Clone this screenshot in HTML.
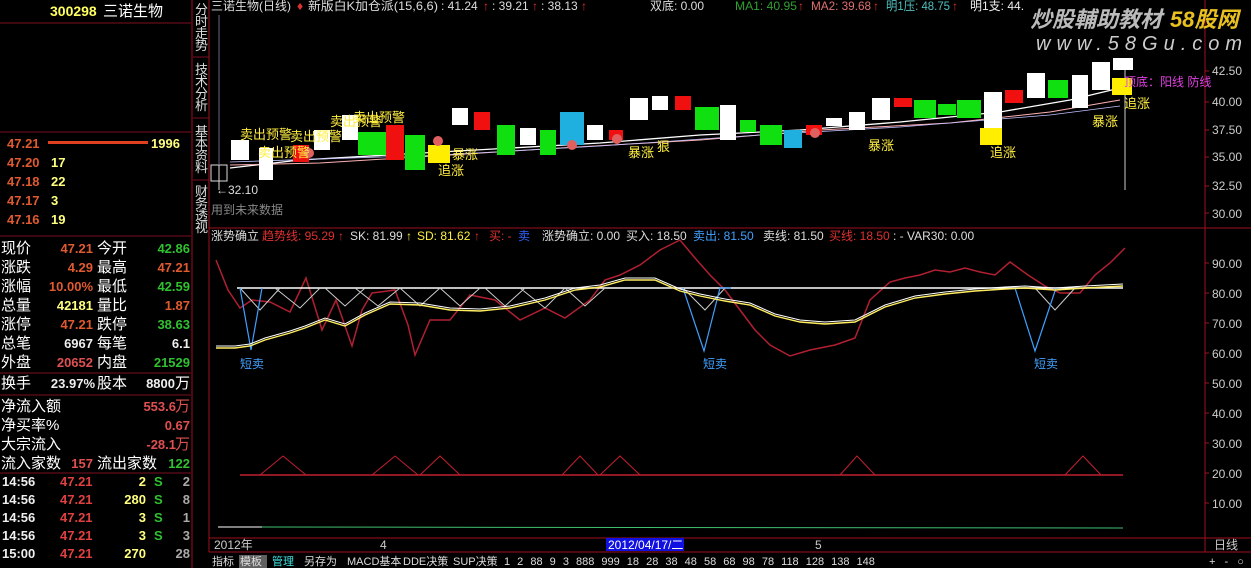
<!DOCTYPE html><html><head><meta charset="utf-8"><style>
body{margin:0;width:1251px;height:568px;background:#000;overflow:hidden;font-family:"Liberation Sans","Noto Sans CJK SC",sans-serif;}
svg{display:block}
text{font-family:"Liberation Sans","Noto Sans CJK SC",sans-serif}
</style></head><body>
<svg width="1251" height="568" viewBox="0 0 1251 568" xmlns="http://www.w3.org/2000/svg">
<rect width="1251" height="568" fill="#000"/>
<g font-size="14">
<text x="50" y="16" fill="#ffff60" font-weight="bold" font-size="14">300298</text>
<text x="103" y="16" fill="#fff" font-size="15">三诺生物</text>
<line x1="0" y1="23" x2="191" y2="23" stroke="#7a1020"/>
<line x1="0" y1="132" x2="191" y2="132" stroke="#7a1020"/>
<text x="7" y="148" fill="#e05a30" font-weight="bold" font-size="13">47.21</text>
<rect x="48" y="141" width="100" height="3" fill="#e04020"/>
<text x="151" y="148" fill="#ffff80" font-weight="bold" font-size="13">1996</text>
<g font-weight="bold" font-size="13"><text x="7" y="167" fill="#e05a30">47.20</text><text x="51" y="167" fill="#ffff80">17</text>
<text x="7" y="186" fill="#e05a30">47.18</text><text x="51" y="186" fill="#ffff80">22</text>
<text x="7" y="205" fill="#e05a30">47.17</text><text x="51" y="205" fill="#ffff80">3</text>
<text x="7" y="224" fill="#e05a30">47.16</text><text x="51" y="224" fill="#ffff80">19</text></g>
<line x1="0" y1="236" x2="191" y2="236" stroke="#7a1020"/>
<g fill="#fff" font-size="15">
<text x="1" y="253">现价</text><text x="97" y="253">今开</text>
<text x="1" y="272">涨跌</text><text x="97" y="272">最高</text>
<text x="1" y="291">涨幅</text><text x="97" y="291">最低</text>
<text x="1" y="310">总量</text><text x="97" y="310">量比</text>
<text x="1" y="329">涨停</text><text x="97" y="329">跌停</text>
<text x="1" y="348">总笔</text><text x="97" y="348">每笔</text>
<text x="1" y="367">外盘</text><text x="97" y="367">内盘</text>
<text x="1" y="388">换手</text><text x="97" y="388">股本</text>
<text x="1" y="411">净流入额</text><text x="1" y="430">净买率%</text><text x="1" y="449">大宗流入</text>
<text x="1" y="468">流入家数</text><text x="97" y="468">流出家数</text>
</g>
<g font-weight="bold" font-size="13" text-anchor="end">
<text x="93" y="253" fill="#e05a30">47.21</text><text x="190" y="253" fill="#30c030">42.86</text>
<text x="93" y="272" fill="#e05a30">4.29</text><text x="190" y="272" fill="#e05a30">47.21</text>
<text x="93" y="291" fill="#e05a30">10.00%</text><text x="190" y="291" fill="#30c030">42.59</text>
<text x="93" y="310" fill="#ffff80">42181</text><text x="190" y="310" fill="#e05a30">1.87</text>
<text x="93" y="329" fill="#e05a30">47.21</text><text x="190" y="329" fill="#30c030">38.63</text>
<text x="93" y="348" fill="#eee">6967</text><text x="190" y="348" fill="#eee">6.1</text>
<text x="93" y="367" fill="#e05050">20652</text><text x="190" y="367" fill="#30c030">21529</text>
<text x="95" y="388" fill="#eee">23.97%</text><text x="175" y="388" fill="#eee">8800</text>
<text x="176" y="411" fill="#e05050">553.6</text><text x="190" y="430" fill="#e05050">0.67</text><text x="176" y="449" fill="#e05050">-28.1</text>
<text x="93" y="468" fill="#e05050">157</text><text x="190" y="468" fill="#30c030">122</text>
</g>
<g fill="#fff" font-size="15"><text x="175" y="388">万</text></g>
<g fill="#e05050" font-size="15"><text x="175" y="411">万</text><text x="175" y="449">万</text></g>
<line x1="0" y1="373" x2="191" y2="373" stroke="#7a1020"/>
<line x1="0" y1="395" x2="191" y2="395" stroke="#7a1020"/>
<line x1="0" y1="473" x2="191" y2="473" stroke="#7a1020"/>
<g font-weight="bold" font-size="13">
<text x="2" y="486" fill="#eee">14:56</text><text x="60" y="486" fill="#e04040">47.21</text><text x="146" y="486" fill="#ffff80" text-anchor="end">2</text><text x="154" y="486" fill="#30c030">S</text><text x="190" y="486" fill="#aaa" text-anchor="end">2</text>
<text x="2" y="504" fill="#eee">14:56</text><text x="60" y="504" fill="#e04040">47.21</text><text x="146" y="504" fill="#ffff80" text-anchor="end">280</text><text x="154" y="504" fill="#30c030">S</text><text x="190" y="504" fill="#aaa" text-anchor="end">8</text>
<text x="2" y="522" fill="#eee">14:56</text><text x="60" y="522" fill="#e04040">47.21</text><text x="146" y="522" fill="#ffff80" text-anchor="end">3</text><text x="154" y="522" fill="#30c030">S</text><text x="190" y="522" fill="#aaa" text-anchor="end">1</text>
<text x="2" y="540" fill="#eee">14:56</text><text x="60" y="540" fill="#e04040">47.21</text><text x="146" y="540" fill="#ffff80" text-anchor="end">3</text><text x="154" y="540" fill="#30c030">S</text><text x="190" y="540" fill="#aaa" text-anchor="end">3</text>
<text x="2" y="558" fill="#eee">15:00</text><text x="60" y="558" fill="#e04040">47.21</text><text x="146" y="558" fill="#ffff80" text-anchor="end">270</text><text x="190" y="558" fill="#aaa" text-anchor="end">28</text>
</g>
</g>
<line x1="192" y1="0" x2="192" y2="568" stroke="#a01020"/>
<g fill="#ddd" font-size="13">
<text x="195" y="14">分</text><text x="195" y="26">时</text><text x="195" y="38">走</text><text x="195" y="50">势</text>
<text x="195" y="74">技</text><text x="195" y="86">术</text><text x="195" y="98">分</text><text x="195" y="110">析</text>
<text x="195" y="136">基</text><text x="195" y="148">本</text><text x="195" y="160">资</text><text x="195" y="172">料</text>
<text x="195" y="196">财</text><text x="195" y="208">务</text><text x="195" y="220">透</text><text x="195" y="232">视</text>
</g>
<g stroke="#7a1020"><line x1="193" y1="57" x2="209" y2="57"/><line x1="193" y1="118" x2="209" y2="118"/><line x1="193" y1="180" x2="209" y2="180"/></g>
<line x1="209" y1="0" x2="209" y2="552" stroke="#a01020"/>
<line x1="1205" y1="0" x2="1205" y2="552" stroke="#a01020"/>
<line x1="209" y1="228" x2="1251" y2="228" stroke="#a01020"/>
<line x1="209" y1="538" x2="1251" y2="538" stroke="#a01020"/>
<line x1="209" y1="552" x2="1251" y2="552" stroke="#a01020"/>
<g fill="#ccc" font-size="12">
<text x="1212" y="75">42.50</text><text x="1212" y="106">40.00</text><text x="1212" y="134">37.50</text><text x="1212" y="161">35.00</text><text x="1212" y="190">32.50</text><text x="1212" y="218">30.00</text>
<text x="1212" y="268">90.00</text><text x="1212" y="298">80.00</text><text x="1212" y="328">70.00</text><text x="1212" y="358">60.00</text><text x="1212" y="388">50.00</text><text x="1212" y="418">40.00</text><text x="1212" y="448">30.00</text><text x="1212" y="478">20.00</text><text x="1212" y="508">10.00</text>
<text x="1214" y="549">日线</text>
</g>
<g stroke="#a01020"><path d="M1205 71h4M1205 102h4M1205 130h4M1205 157h4M1205 186h4M1205 213h4M1205 263h4M1205 293h4M1205 323h4M1205 353h4M1205 383h4M1205 413h4M1205 443h4M1205 473h4M1205 503h4"/></g>
<g font-size="12">
<text x="211" y="10" fill="#ddd" textLength="80" lengthAdjust="spacingAndGlyphs">三诺生物(日线)</text><text x="297" y="10" fill="#e03030">♦</text><text x="308" y="10" fill="#ddd" textLength="130" lengthAdjust="spacingAndGlyphs">新版白K加仓派(15,6,6)</text>
<text x="441" y="10" fill="#ddd">: 41.24</text><text x="483" y="10" fill="#e03030">↑</text><text x="492" y="10" fill="#ddd">: 39.21</text><text x="532" y="10" fill="#e03030">↑</text><text x="541" y="10" fill="#ddd">: 38.13</text><text x="581" y="10" fill="#e03030">↑</text>
<text x="650" y="10" fill="#ddd">双底: 0.00</text>
<text x="735" y="10" fill="#30a030" textLength="62" lengthAdjust="spacingAndGlyphs">MA1: 40.95</text><text x="798" y="10" fill="#e03030">↑</text>
<text x="811" y="10" fill="#e07070" textLength="60" lengthAdjust="spacingAndGlyphs">MA2: 39.68</text><text x="873" y="10" fill="#e03030">↑</text>
<text x="886" y="10" fill="#50c0c0" textLength="64" lengthAdjust="spacingAndGlyphs">明1压: 48.75</text><text x="952" y="10" fill="#e03030">↑</text>
<text x="970" y="10" fill="#eee">明1支: 44.</text>
</g>
<text x="1030" y="27" fill="#bbb" font-size="22" font-style="italic" font-weight="bold">炒股輔助教材</text><text x="1170" y="27" fill="#e8c020" font-size="22" font-style="italic" font-weight="bold">58股网</text>
<text x="1036" y="50" fill="#ccc" font-size="20" font-style="italic" letter-spacing="6">www.58Gu.com</text>
<g fill="none">
<path d="M230 168 L300 160 L440 152 L600 143 L700 135 L800 130 L900 122 L1000 112 L1070 100 L1120 88" stroke="#fff" stroke-width="1.3"/>
<path d="M230 165 L320 163 L450 155 L560 148 L700 140 L820 130 L950 123 L1050 112 L1120 100" stroke="#ffb0b0"/>
<path d="M230 162 L440 155 L600 146 L760 135 L900 127 L1050 115 L1120 106" stroke="#c0c0ff" stroke-width=".8"/>
</g>
<line x1="1125" y1="70" x2="1125" y2="190" stroke="#ccc"/>
<g>
<g fill="#fff"><rect x="231" y="140" width="18" height="20"/><rect x="259" y="148" width="14" height="32"/><rect x="314" y="130" width="16" height="20"/><rect x="342" y="115" width="16" height="25"/><rect x="452" y="108" width="16" height="17"/><rect x="520" y="128" width="16" height="17"/><rect x="587" y="125" width="16" height="15"/><rect x="630" y="98" width="18" height="22"/><rect x="652" y="96" width="16" height="14"/><rect x="720" y="105" width="16" height="35"/><rect x="826" y="118" width="16" height="8"/><rect x="849" y="112" width="16" height="18"/><rect x="872" y="98" width="18" height="22"/><rect x="984" y="92" width="18" height="38"/><rect x="1027" y="73" width="18" height="25"/><rect x="1072" y="75" width="16" height="33"/><rect x="1092" y="62" width="18" height="28"/><rect x="1113" y="58" width="20" height="12"/></g>
<g fill="#f01010"><rect x="293" y="145" width="16" height="17"/><rect x="386" y="125" width="18" height="35"/><rect x="474" y="112" width="16" height="18"/><rect x="609" y="130" width="14" height="10"/><rect x="675" y="96" width="16" height="14"/><rect x="806" y="125" width="16" height="10"/><rect x="894" y="98" width="18" height="9"/><rect x="1005" y="90" width="18" height="13"/></g>
<g fill="#10e010"><rect x="358" y="132" width="28" height="23"/><rect x="405" y="135" width="20" height="35"/><rect x="497" y="125" width="18" height="30"/><rect x="540" y="130" width="16" height="25"/><rect x="695" y="107" width="24" height="23"/><rect x="740" y="120" width="16" height="12"/><rect x="760" y="125" width="22" height="20"/><rect x="914" y="100" width="22" height="18"/><rect x="938" y="104" width="18" height="11"/><rect x="957" y="100" width="24" height="18"/><rect x="1048" y="80" width="20" height="18"/></g>
<g fill="#20b0e0"><rect x="560" y="112" width="24" height="33"/><rect x="784" y="130" width="18" height="18"/></g>
<g fill="#ffee00"><rect x="428" y="145" width="22" height="18"/><rect x="980" y="128" width="22" height="17"/><rect x="1112" y="78" width="20" height="17"/></g>
<g fill="#e06060"><circle cx="572" cy="145" r="5"/><circle cx="617" cy="139" r="5"/><circle cx="309" cy="153" r="5"/><circle cx="815" cy="133" r="5"/><circle cx="438" cy="141" r="5"/></g>
</g>
<g fill="#ffee40" font-size="13">
<text x="240" y="139">卖出预警</text><text x="290" y="141">卖出预警</text><text x="258" y="157">卖出预警</text><text x="330" y="126">卖出预警</text><text x="353" y="122">卖出预警</text>
<text x="452" y="159">暴涨</text><text x="438" y="175">追涨</text><text x="628" y="157">暴涨</text><text x="657" y="151">狠</text>
<text x="868" y="150">暴涨</text><text x="990" y="157">追涨</text><text x="1092" y="126">暴涨</text><text x="1124" y="108">追涨</text>
</g>
<text x="1124" y="86" fill="#e040e0" font-size="12">顶底：阳线 防线</text>
<g fill="none" stroke="#ddd"><rect x="211" y="165" width="16" height="16"/><line x1="219" y1="165" x2="219" y2="190"/><line x1="219" y1="15" x2="219" y2="165" stroke="#668"/></g>
<text x="216" y="194" fill="#ddd" font-size="12">←32.10</text>
<text x="211" y="214" fill="#888" font-size="12">用到未来数据</text>
<g font-size="12">
<text x="211" y="240" fill="#ddd">涨势确立</text><text x="262" y="240" fill="#e03030">趋势线: 95.29</text><text x="338" y="240" fill="#e03030">↑</text>
<text x="350" y="240" fill="#ddd">SK: 81.99</text><text x="406" y="240" fill="#ffee40">↑</text>
<text x="417" y="240" fill="#ffee40">SD: 81.62</text><text x="474" y="240" fill="#e03030">↑</text>
<text x="489" y="240" fill="#e03030">买: -</text><text x="518" y="240" fill="#3060ff">卖</text>
<text x="542" y="240" fill="#ddd">涨势确立: 0.00</text><text x="626" y="240" fill="#ddd">买入: 18.50</text><text x="693" y="240" fill="#40a0ff">卖出: 81.50</text>
<text x="763" y="240" fill="#ddd">卖线: 81.50</text><text x="829" y="240" fill="#e03030">买线: 18.50</text><text x="893" y="240" fill="#ddd">: - VAR30: 0.00</text>
</g>
<g fill="none">
<path d="M216 260 L228 290 L240 308 L252 300 L270 302 L290 312 L306 278 L322 330 L336 300 L352 346 L362 310 L372 293 L395 290 L408 325 L415 355 L430 320 L450 320 L470 295 L495 300 L520 320 L545 308 L565 318 L590 300 L605 280 L620 275 L640 265 L660 250 L680 240 L695 258 L710 275 L725 290 L740 310 L755 330 L770 345 L790 356 L810 350 L835 345 L855 338 L870 300 L890 282 L905 278 L920 275 L935 270 L950 272 L965 268 L980 272 L995 275 L1010 262 L1028 275 L1045 286 L1060 293 L1080 293 L1095 275 L1110 263 L1125 248" stroke="#b02030" stroke-width="1.5"/>
<path d="M237 288 L1123 288" stroke="#fff" stroke-width="1.5"/>
<path d="M240 288 L260 310 L280 288 M275 288 L300 308 L320 288 M325 288 L345 306 L365 288 M355 288 L378 306 L400 288 M400 288 L420 306 L440 288 M440 288 L460 306 L480 288 M485 288 L505 306 L525 288 M520 288 L545 308 L565 288 M565 288 L585 306 L605 288 M683 288 L705 310 L725 288 M1035 288 L1055 310 L1075 288" stroke="#ccc"/>
<path d="M240 288 L251 350 L262 288 M683 288 L704 351 L720 288 L731 288 M1015 288 L1035 351 L1056 288" stroke="#40a0ff" stroke-width="1.2"/>
<path d="M216 348 L235 348 L250 346 L265 340 L290 333 L305 328 L325 320 L345 326 L365 315 L390 304 L420 305 L450 310 L480 311 L510 308 L545 300 L575 290 L600 287 L625 280 L655 280 L680 291 L700 296 L725 301 L750 305 L775 316 L800 322 L825 324 L855 322 L885 307 L915 298 L945 294 L975 291 L1005 289 L1025 288 L1055 290 L1085 288 L1123 286" stroke="#ffee60" stroke-width="1.4"/>
<path d="M216 346 L235 346 L250 344 L265 338 L290 331 L305 326 L325 318 L345 324 L365 313 L390 302 L420 303 L450 308 L480 309 L510 306 L545 298 L575 288 L600 285 L625 278 L655 278 L680 289 L700 294 L725 299 L750 303 L775 314 L800 320 L825 322 L855 320 L885 305 L915 296 L945 292 L975 289 L1005 287 L1025 286 L1055 288 L1085 286 L1123 284" stroke="#fff" stroke-width="1"/>
<path d="M240 475 L1123 475" stroke="#c02030" stroke-width="1.5"/>
<path d="M260 475 L283 456 L306 475 M372 475 L395 456 L418 475 M420 475 L440 456 L460 475 M562 475 L580 456 L598 475 M600 475 L620 456 L640 475 M840 475 L857 456 L875 475 M1065 475 L1083 456 L1101 475" stroke="#c02030"/>
<path d="M218 527 L1123 528" stroke="#40c070"/>
<path d="M218 527 L262 527" stroke="#fff"/>
</g>
<g fill="#40a0ff" font-size="12"><text x="240" y="368">短卖</text><text x="703" y="368">短卖</text><text x="1034" y="368">短卖</text></g>
<g font-size="12" fill="#ccc"><text x="214" y="549">2012年</text><text x="380" y="549">4</text><text x="815" y="549">5</text></g>
<rect x="606" y="538" width="78" height="13" fill="#1010e0"/><text x="608" y="549" fill="#fff" font-size="12">2012/04/17/二</text>
<g font-size="11" fill="#ddd">
<text x="212" y="565">指标</text><rect x="239" y="555" width="28" height="13" fill="#606060"/><text x="240" y="565">模板</text><text x="272" y="565" fill="#40e0e0">管理</text><text x="304" y="565">另存为</text><text x="347" y="565">MACD基本</text><text x="403" y="565">DDE决策</text><text x="453" y="565">SUP决策</text>
<text x="504" y="565" word-spacing="4">1 2 88 9 3 888 999 18 28 38 48 58 68 98 78 118 128 138 148</text>
<text x="1209" y="565" word-spacing="6">+ - ○</text>
</g>
</svg>
</body></html>
